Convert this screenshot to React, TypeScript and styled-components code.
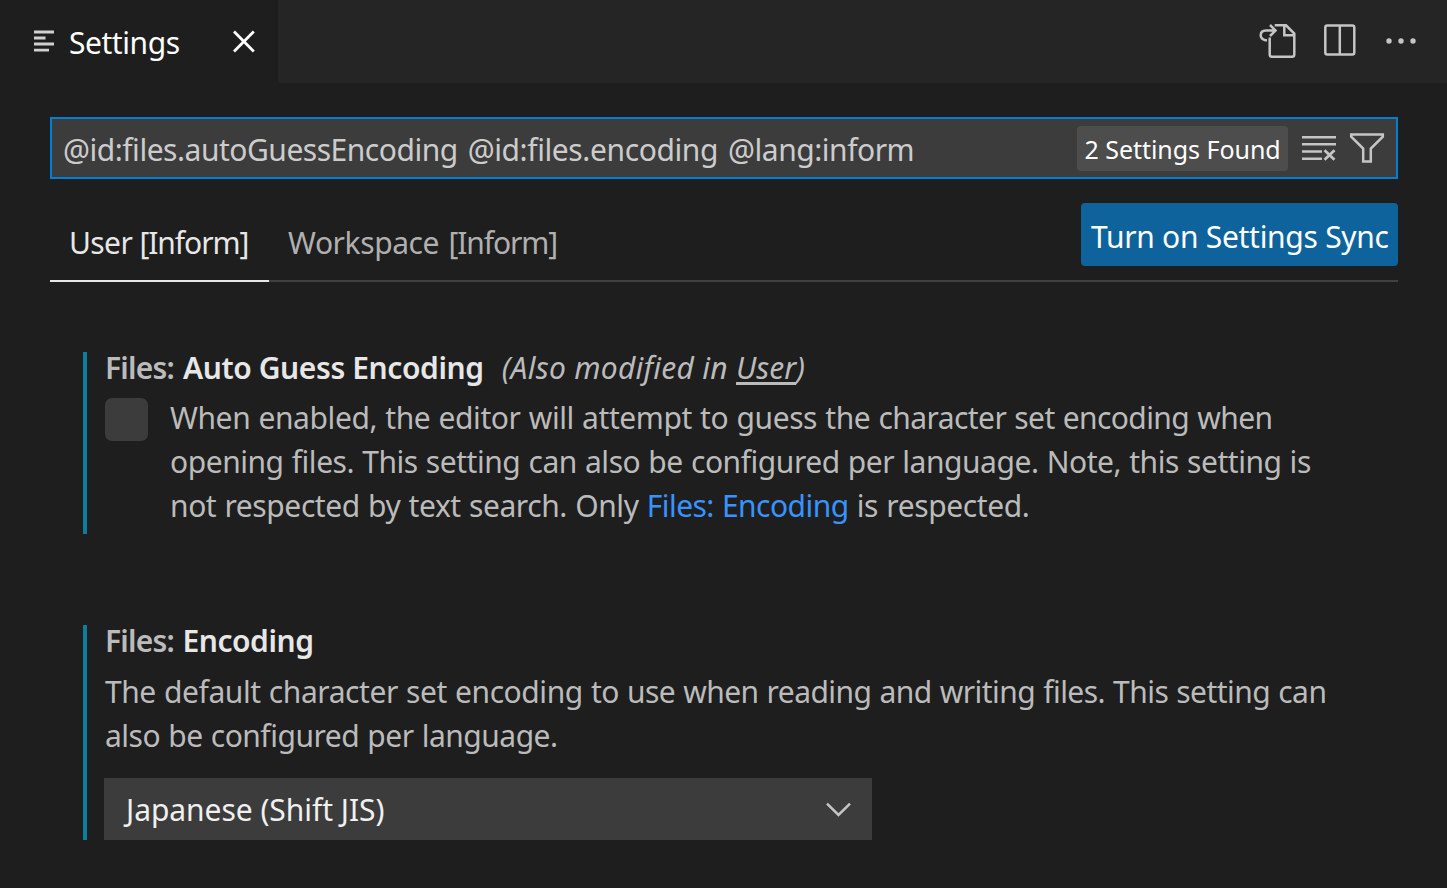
import React from "react";
import styled, { createGlobalStyle } from "styled-components";

const GlobalStyle = createGlobalStyle`
  * { box-sizing: border-box; }
  body {
    margin: 0;
    background: #1e1e1e;
    overflow: hidden;
    font-family: "Noto Sans", "Open Sans", sans-serif;
  }
`;

const Window = styled.div`
  width: 1447px;
  height: 888px;
  background: #1e1e1e;
  color: #bbbbbb;
  font-size: 30px;
  line-height: 44px;
`;

const Run = styled.span<{ $spacing?: number; $word?: number }>`
  letter-spacing: ${(p) => p.$spacing ?? 0}px;
  word-spacing: ${(p) => p.$word ?? 0}px;
  white-space: pre;
`;

const TabBar = styled.header`
  display: flex;
  justify-content: space-between;
  height: 83px;
  background: #252526;
`;

const EditorTab = styled.div`
  display: flex;
  align-items: center;
  width: 278px;
  padding: 0 22px 0 34px;
  background: #1e1e1e;
  color: #ffffff;
`;

const TabLabel = styled.div`
  flex: 1;
  padding: 3px 0 0 14px;
`;

const Actions = styled.div`
  display: flex;
  align-items: center;
  gap: 28px;
  padding: 0 30px 3px 0;
`;

const Icon = styled.svg`
  display: block;
  flex: none;
  overflow: visible;
  fill: none;
  stroke: #c5c5c5;
  stroke-width: 2.5;
`;

const Content = styled.main`
  padding: 34px 49px 0 50px;
`;

const SearchBox = styled.div`
  display: flex;
  align-items: center;
  height: 62px;
  padding: 0 12px 0 11px;
  border: 2px solid #007fd4;
  background: #3c3c3c;
  color: #cccccc;
`;

const Query = styled.div`
  flex: 1;
  padding-top: 3px;
`;

const Badge = styled.div`
  width: 211px;
  height: 45px;
  margin-right: 14px;
  padding-left: 7.5px;
  border-radius: 4px;
  background: #4d4d4d;
  color: #ffffff;
  font-size: 25px;
  line-height: 47px;
`;

const SearchIcons = styled.div`
  display: flex;
  gap: 14px;
`;

const ScopeBar = styled.nav`
  display: flex;
  align-items: flex-start;
  height: 103px;
  border-bottom: 2px solid #404040;
`;

const ScopeTab = styled.div<{ $active?: boolean; $width: number }>`
  width: ${(p) => p.$width}px;
  height: 103px;
  padding: 42px 0 0 19px;
  border-bottom: 2px solid ${(p) => (p.$active ? "#e7e7e7" : "transparent")};
  color: ${(p) => (p.$active ? "#e7e7e7" : "#b0b0b0")};
  white-space: nowrap;
`;

const SyncButton = styled.button`
  width: 317px;
  height: 63px;
  margin: 24px 0 0 auto;
  padding: 4px 0 0 10px;
  border: 0;
  border-radius: 4px;
  background: #0e639c;
  color: #ffffff;
  font: inherit;
  text-align: left;
`;

const Setting = styled.section<{ $height: number; $top: number }>`
  height: ${(p) => p.$height}px;
  margin: ${(p) => p.$top}px 0 0 33px;
  padding-left: 18px;
  border-left: 4px solid #0c7d9d;
`;

const SettingTitle = styled.h2<{ $gap: number }>`
  height: 44px;
  margin: 0 0 ${(p) => p.$gap}px;
  font-size: 30px;
  font-weight: 600;
  color: #e7e7e7;
  line-height: 31px;
`;

const Category = styled(Run)`
  color: #bbbbbb;
`;

const Scope = styled(Run)`
  margin-left: 18px;
  color: #bbbbbb;
  font-style: italic;
  font-weight: 400;
`;

const ScopeLink = styled.span`
  letter-spacing: 0;
  text-decoration: underline;
  text-decoration-thickness: 3px;
  text-underline-offset: 3px;
  text-decoration-skip-ink: none;
`;

const CheckRow = styled.div`
  display: flex;
  gap: 22px;
`;

const Checkbox = styled.div`
  flex: none;
  width: 43px;
  height: 43px;
  margin-top: 2px;
  border-radius: 7px;
  background: #3c3c3c;
`;

const Line = styled.div`
  white-space: nowrap;
`;

const SettingLink = styled(Run)`
  color: #3794ff;
`;

const Select = styled.div`
  display: flex;
  align-items: center;
  justify-content: space-between;
  width: 768px;
  height: 62px;
  margin: 20px 0 0 -1px;
  padding: 0 21px 0 22px;
  background: #3c3c3c;
  color: #f0f0f0;
`;

const SelectLabel = styled.div`
  padding-top: 1px;
`;

const App = () => (
  <>
    <GlobalStyle />
    <Window>
      <TabBar>
        <EditorTab>
          <Icon width="21" height="22" viewBox="0 0 21 22">
            <path d="M0 1H20M0 7H11.5M0 13H20M0 19.2H15" stroke="#d0d0d0" strokeWidth="2.8" />
          </Icon>
          <TabLabel><Run $spacing={-0.45}>Settings</Run></TabLabel>
          <Icon width="24" height="24" viewBox="0 0 24 24">
            <path d="M2 1.6L21.8 21.4M21.8 1.6L2 21.4" stroke="#ffffff" strokeWidth="2.8" />
          </Icon>
        </EditorTab>
        <Actions>
          <Icon width="37" height="36" viewBox="0 0 37 36">
            <path d="M15.7 3.3H27L35.3 11.5V32.5Q35.3 34.8 33 34.8H13Q10.7 34.8 10.7 32.5V15.5M25.3 3.3V13.3H35.3" />
            <path d="M8 18.2H6.5Q1.7 17.2 1.7 13.3Q1.7 8.5 6.8 8.5H16M11 3L16.5 8.5L11 14" />
          </Icon>
          <Icon width="33" height="34" viewBox="0 0 33 34">
            <rect x="1.3" y="2.4" width="29" height="29" rx="2" />
            <path d="M15.8 2.4V31.4" />
          </Icon>
          <Icon width="32" height="8" viewBox="0 0 32 8">
            <g fill="#c5c5c5" stroke="none">
              <circle cx="4" cy="5" r="2.7" />
              <circle cx="16" cy="5" r="2.7" />
              <circle cx="28" cy="5" r="2.7" />
            </g>
          </Icon>
        </Actions>
      </TabBar>

      <Content>
        <SearchBox>
          <Query>
            <Run $spacing={-0.48} $word={2.6}>@id:files.autoGuessEncoding </Run>
            <Run $spacing={-0.4} $word={2.6}>@id:files.encoding </Run>
            <Run $spacing={-0.46}>@lang:inform</Run>
          </Query>
          <Badge><Run $spacing={-0.04}>2 Settings Found</Run></Badge>
          <SearchIcons>
            <Icon width="34" height="30" viewBox="0 0 34 30">
              <path d="M0 4.3H34M0 11.3H34M0 18.5H20M0 25.7H20" />
              <path d="M22.5 17.3L32.5 26.8M32.5 17.3L22.5 26.8" strokeWidth="2.8" />
            </Icon>
            <Icon width="34" height="30" viewBox="0 0 34 30">
              <path d="M1.2 1.6H32.8V3.7L20.8 15.5V28.6H13.2V15.5L1.2 3.7Z" />
            </Icon>
          </SearchIcons>
        </SearchBox>

        <ScopeBar>
          <ScopeTab $active $width={219}>
            <Run $spacing={-0.6}>User </Run>
            <Run $spacing={-1.05}>[Inform]</Run>
          </ScopeTab>
          <ScopeTab $width={310}>
            <Run $spacing={-0.42} $word={2}>Workspace </Run>
            <Run $spacing={-1.1}>[Inform]</Run>
          </ScopeTab>
          <SyncButton><Run $spacing={-0.28}>Turn on Settings Sync</Run></SyncButton>
        </ScopeBar>

        <Setting $top={70} $height={182}>
          <SettingTitle $gap={0}>
            <Category $spacing={-0.8} $word={2}>Files: </Category>
            <Run $spacing={-0.4}>Auto Guess Encoding</Run>
            <Scope $spacing={0.27}>(Also modified in <ScopeLink>User</ScopeLink>)</Scope>
          </SettingTitle>
          <CheckRow>
            <Checkbox />
            <div>
              <Line>
                <Run $spacing={-0.41} $word={0.8}>When enabled, the editor will attempt to guess the </Run>
                <Run $spacing={-0.58} $word={0.8}>character set encoding when</Run>
              </Line>
              <Line>
                <Run $spacing={-0.46} $word={0.8}>opening files. This setting can also be configured per language. Note, this setting is</Run>
              </Line>
              <Line>
                <Run $spacing={-0.41} $word={0.8}>not respected by text search. Only </Run>
                <SettingLink $spacing={-0.54} $word={0.8}>Files: Encoding</SettingLink>
                <Run $spacing={-0.4} $word={0.8}> is respected.</Run>
              </Line>
            </div>
          </CheckRow>
        </Setting>

        <Setting $top={91} $height={215}>
          <SettingTitle $gap={1}>
            <Category $spacing={-0.8} $word={1.5}>Files: </Category>
            <Run $spacing={-0.45}>Encoding</Run>
          </SettingTitle>
          <Line>
            <Run $spacing={-0.43} $word={0.8}>The default character set encoding </Run>
            <Run $spacing={-0.55} $word={0.8}>to use when reading and writing files. </Run>
            <Run $spacing={-0.54} $word={0.8}>This setting can</Run>
          </Line>
          <Line>
            <Run $spacing={-0.49} $word={0.8}>also be configured per language.</Run>
          </Line>
          <Select>
            <SelectLabel><Run $spacing={-0.05}>Japanese (Shift JIS)</Run></SelectLabel>
            <Icon width="25" height="14" viewBox="0 0 25 14">
              <path d="M1 1.6L12.5 13L24 1.6" />
            </Icon>
          </Select>
        </Setting>
      </Content>
    </Window>
  </>
);

export default App;
